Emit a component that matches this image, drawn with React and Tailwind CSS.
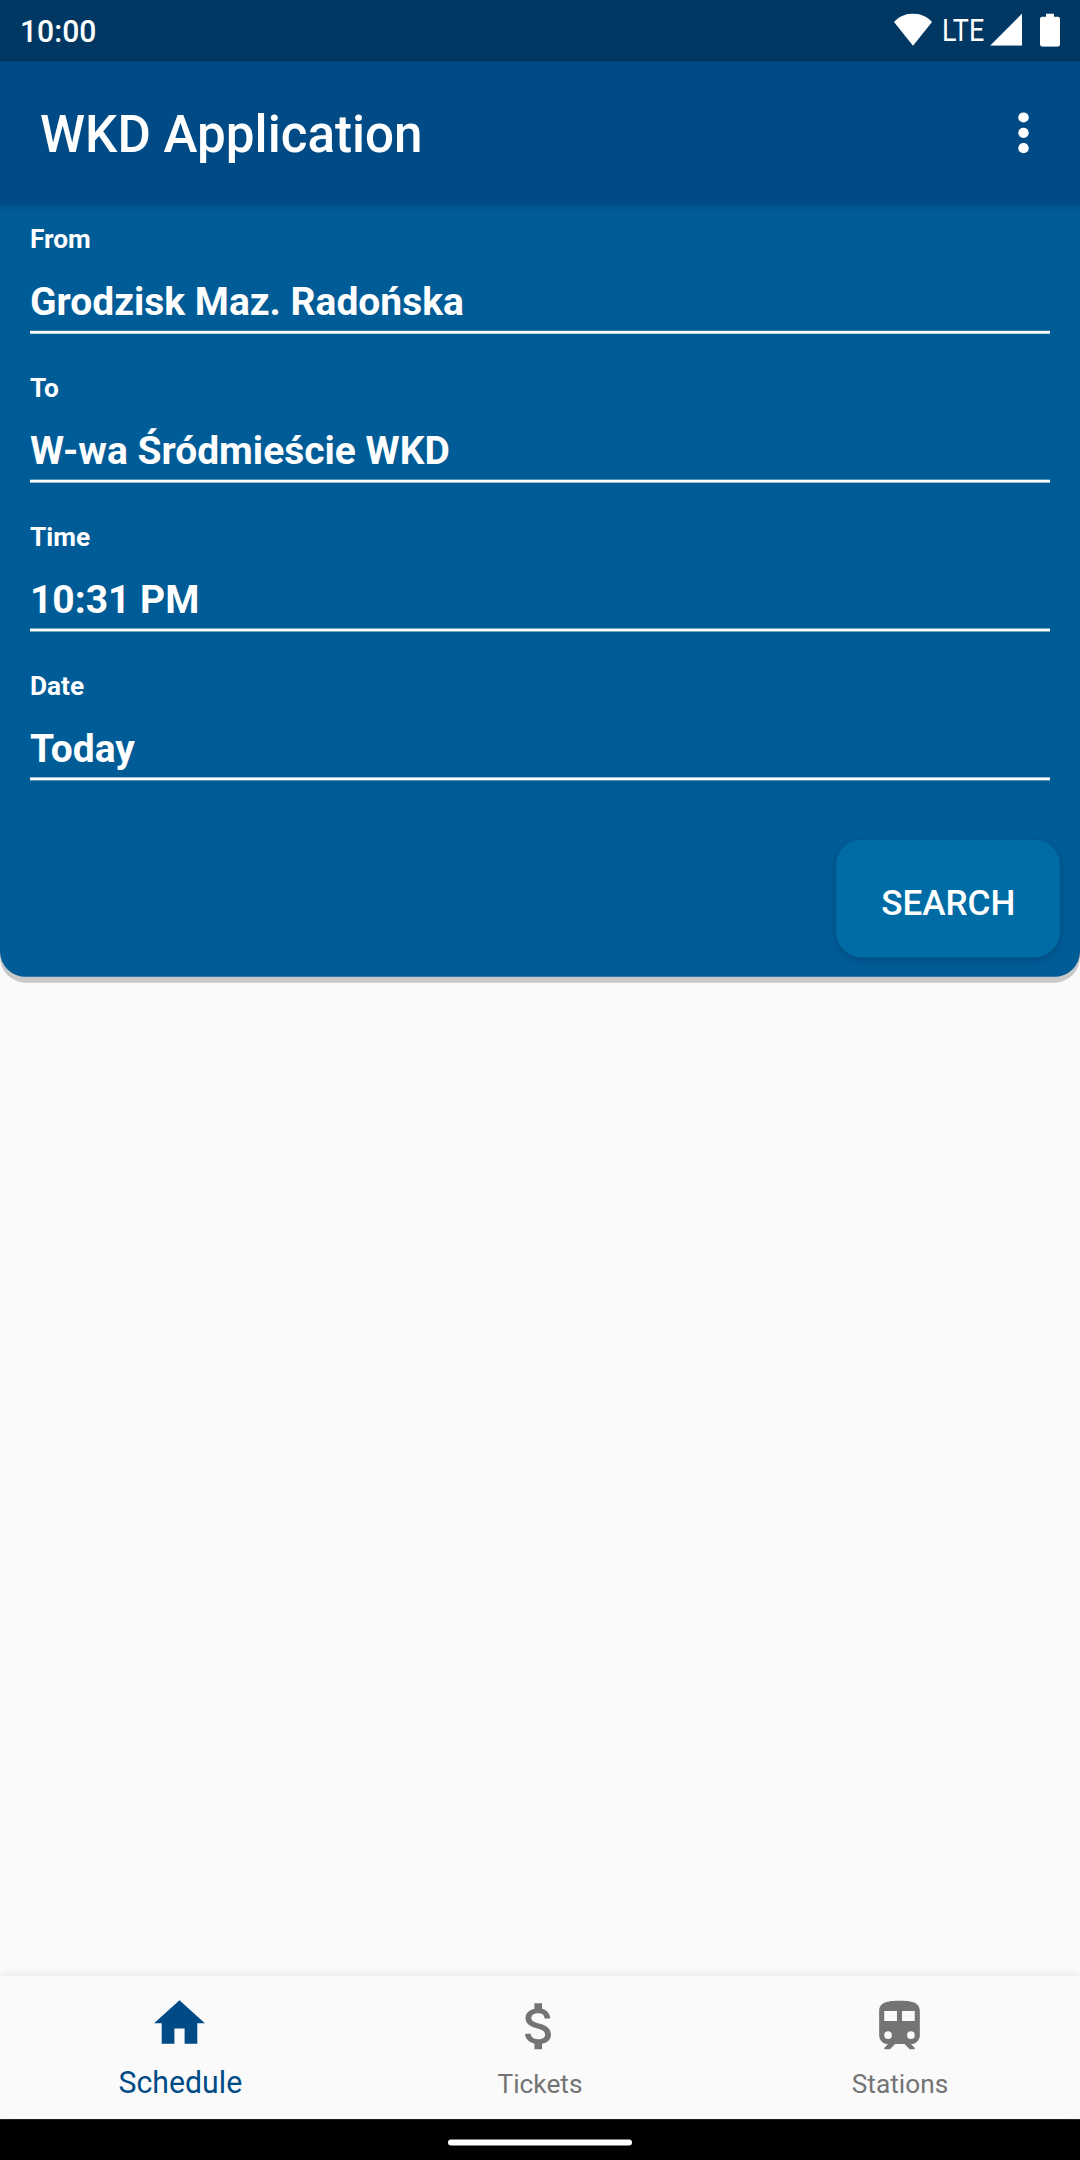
import React from "react";

const fields = [
  { label: "From", value: "Grodzisk Maz. Radońska" },
  { label: "To", value: "W-wa Śródmieście WKD" },
  { label: "Time", value: "10:31 PM" },
  { label: "Date", value: "Today" },
];

function StatusBar() {
  return (
    <div className="flex h-[63px] shrink-0 items-center justify-between bg-[#003863] pl-5 pr-5 text-white">
      <span className="origin-left scale-x-[0.955] pt-0.5 text-[31.5px] font-medium leading-none">10:00</span>
      <div className="flex items-center pb-[2px]">
        <svg className="h-[33px] w-[38px]" viewBox="0 0 38 33" fill="#fff">
          <path d="M0 8.6C5.2 3 12 0 19 0s13.800 3 19 8.600L19 33z" />
        </svg>
        <span className="ml-[10px] block w-[44px] origin-left scale-x-[0.84] whitespace-nowrap text-[32px] font-normal leading-none">
          LTE
        </span>
        <svg className="ml-[4px] h-[33px] w-[32px]" viewBox="0 0 32 33" fill="#fff">
          <path d="M0 33L32 0v33z" />
        </svg>
        <svg className="ml-[18px] mt-[1px] h-[34px] w-[20px]" viewBox="0 0 20 34" fill="#fff">
          <path d="M6 0h8v3.200h3.800q2.200 0 2.200 2.200v26.400q0 2.200-2.200 2.200H2.200Q0 34 0 31.800V5.400q0-2.200 2.200-2.200H6z" />
        </svg>
      </div>
    </div>
  );
}

function AppBar() {
  return (
    <header className="flex h-[147px] shrink-0 items-center justify-between pl-[40px] pr-[25px] text-white">
      <h1 className="origin-left scale-x-[0.975] pt-1 text-[52.5px] font-medium leading-none">WKD Application</h1>
      <svg className="h-[63px] w-[63px]" viewBox="0 0 24 24" fill="#fff" aria-label="More options">
        <circle cx="12" cy="6" r="2" />
        <circle cx="12" cy="12" r="2" />
        <circle cx="12" cy="18" r="2" />
      </svg>
    </header>
  );
}

function Field({ label, value }) {
  return (
    <div className="flex flex-col gap-[18px] border-b-[3px] border-white font-bold text-white">
      <div className="h-8 text-[26.25px] leading-8">{label}</div>
      <div className="h-[60px] origin-left scale-x-[0.99] text-[39.375px] leading-[62px]">{value}</div>
    </div>
  );
}

function SearchCard() {
  return (
    <section className="-mt-1 flex h-[798px] shrink-0 flex-col rounded-b-[26px] bg-[#005c97] pt-6 shadow-[0_6px_0_#c8c8c8]">
      <div className="flex flex-col gap-10 px-[30px]">
        {fields.map((f) => (
          <Field key={f.label} {...f} />
        ))}
      </div>
      <button className="mr-5 mt-[61px] h-[121px] w-[224px] self-end rounded-[26px] bg-[#006ca6] pt-[9px] text-[36.75px] font-medium leading-none text-white shadow-[0_3px_8px_rgba(0,30,60,0.25)]">
        <span className="inline-block scale-x-[0.955]">SEARCH</span>
      </button>
    </section>
  );
}

function Tab({ label, active, children }) {
  return (
    <div
      className={
        active
          ? "flex flex-1 flex-col items-center pt-[17px] text-[#004b85]"
          : "flex flex-1 flex-col items-center pt-5 text-[#747474]"
      }
    >
      <svg
        className="mr-px h-[63px] w-[61px]"
        viewBox="0 0 24 24"
        preserveAspectRatio="none"
        fill="currentColor"
      >
        {children}
      </svg>
      <span
        className={
          active
            ? "mt-[10px] scale-x-[0.96] text-[31.5px] leading-10"
            : "mt-2 text-[26.25px] leading-10"
        }
      >
        {label}
      </span>
    </div>
  );
}

function BottomNav() {
  return (
    <nav className="flex h-[147px] shrink-0 bg-[#fafafa] shadow-[0_0_12px_rgba(0,0,0,0.1)]">
      <Tab label="Schedule" active>
        <path d="M10 20v-6h4v6h5v-8h3L12 3 2 12h3v8z" />
      </Tab>
      <Tab label="Tickets">
        <path d="M11.800 10.900c-2.270-.59-3-1.200-3-2.150 0-1.090 1.010-1.850 2.700-1.850 1.780 0 2.440.85 2.500 2.100h2.210c-.07-1.720-1.120-3.300-3.210-3.810V3h-3v2.160c-1.940.42-3.500 1.680-3.500 3.610 0 2.310 1.910 3.460 4.700 4.130 2.500.6 3 1.480 3 2.410 0 .69-.49 1.790-2.700 1.790-2.060 0-2.870-.92-2.980-2.100h-2.200c.12 2.190 1.760 3.420 3.680 3.830V21h3v-2.150c1.950-.37 3.500-1.500 3.500-3.550 0-2.840-2.430-3.810-4.700-4.400z" />
      </Tab>
      <Tab label="Stations">
        <path
          fillRule="evenodd"
          d="M12 2c-4.420 0-8 .5-8 4v9.500C4 17.430 5.570 19 7.500 19L6 20.500v.5h2.230l2-2H14l2 2h2v-.5L16.500 19c1.930 0 3.500-1.570 3.500-3.500V6c0-3.500-3.580-4-8-4zM6 6h5v4H6zM13 6h5v4h-5zM7.500 14a1.500 1.500 0 1 0 0 3 1.500 1.500 0 0 0 0-3zM16.500 14a1.500 1.500 0 1 0 0 3 1.500 1.500 0 0 0 0-3z"
        />
      </Tab>
    </nav>
  );
}

export default function App() {
  return (
    <div className="h-[2160px] w-[1080px] overflow-hidden bg-black">
      <div className="flex h-[2220px] w-[1080px] origin-top scale-y-[0.97297] flex-col bg-[#fafafa] font-['Roboto',sans-serif]">
        <div className="relative z-10 shrink-0 bg-[#004b85] shadow-[0_2px_9px_rgba(0,40,80,0.3)]">
          <StatusBar />
          <AppBar />
        </div>
        <SearchCard />
        <main className="flex-1" />
        <BottomNav />
        <div className="flex h-[42px] shrink-0 items-center justify-center bg-black pt-[5px]">
          <div className="h-[6px] w-[184px] rounded-full bg-white" />
        </div>
      </div>
    </div>
  );
}
